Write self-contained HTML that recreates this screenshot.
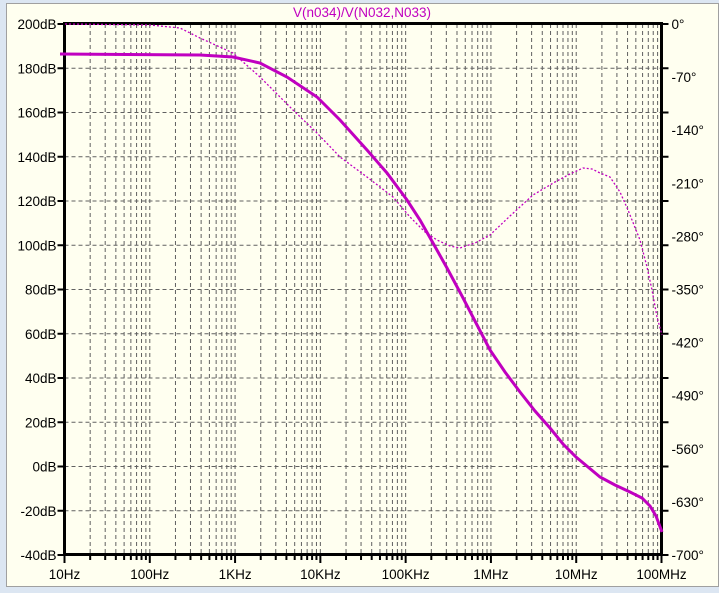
<!DOCTYPE html><html><head><style>
body{margin:0;width:719px;height:593px;overflow:hidden;background:#dce6f2;font-family:"Liberation Sans",Arial,sans-serif}
</style></head><body>
<svg width="719" height="593" xmlns="http://www.w3.org/2000/svg" style="position:absolute;left:0;top:0">
<rect x="0" y="0" width="719" height="593" fill="#dce6f2"/>
<rect x="6.5" y="3.5" width="712" height="583" fill="#fffff0" stroke="#a0a0a0"/>
<g id="grid" stroke="#606060" stroke-width="1" stroke-dasharray="4,3" fill="none"></g>
<g id="ticks" stroke="#000" stroke-width="2"></g>
<rect x="64.5" y="23.5" width="597" height="531" fill="none" stroke="#000" stroke-width="3"/>
<polyline fill="none" stroke="#c000c0" stroke-width="1.3" stroke-dasharray="2,2" points="65,24 150,25 180,28 200,38 233,53 260,77 293,110 317,133 340,157 367,177 393,197 410,217 425,232 437,240 450,246 460,248 475,243 490,235 510,216 533,195 555,182 570,174 583,168 592,169 600,173 610,177 620,192 628,210 634,225 640,240 647,267 652,290 657,317 662,335"/>
<polyline fill="none" stroke="#c000c0" stroke-width="3" points="60,54 200,55 233,57 260,63 287,77 317,97 340,120 367,150 387,173 407,200 420,220 433,243 447,268 462,296 476,323 490,350 505,372 520,392 535,411 550,428 563,444 576,457 588,467 600,477 615,485 630,492 642,498 650,506 656,516 662,532"/>
<g font-size="13.5" fill="#000" id="lab"></g>
<text x="362" y="17" font-size="13.5" fill="#c000c0" text-anchor="middle">V(n034)/V(N032,N033)</text>
</svg>
<script>
const ns="http://www.w3.org/2000/svg";
const g=document.getElementById('grid'),t=document.getElementById('ticks'),l=document.getElementById('lab');
function el(p,n,a,txt){const e=document.createElementNS(ns,n);for(const k in a)e.setAttribute(k,a[k]);if(txt)e.textContent=txt;p.appendChild(e);}
const x0=64.5,x1=661.5,y0=24,y1=555,dec=(x1-x0)/7;
for(let d=0;d<7;d++)for(let m=1;m<=9;m++){const x=x0+dec*(d+Math.log10(m));if(x>x0+1)el(g,'line',{x1:x,y1:y0,x2:x,y2:y1});el(t,'line',{x1:x,y1:y1,x2:x,y2:y1+(m==1?8:5)});}
el(t,'line',{x1:x1,y1:y1,x2:x1,y2:y1+8});
const fl=['10Hz','100Hz','1KHz','10KHz','100KHz','1MHz','10MHz','100MHz'];
fl.forEach((s,i)=>el(l,'text',{x:x0+dec*i,y:579,'text-anchor':'middle'},s));
for(let i=0;i<=12;i++){const y=y0+(y1-y0)*i/12;if(i>0&&i<12)el(g,'line',{x1:x0,y1:y,x2:x1,y2:y});
el(t,'line',{x1:x0-7,y1:y,x2:x0,y2:y});el(t,'line',{x1:x1,y1:y,x2:x1+7,y2:y});
el(l,'text',{x:x0-8,y:y+5,'text-anchor':'end'},(200-20*i)+'dB');}
for(let i=0;i<=10;i++){const y=y0+(y1-y0)*i/10;el(l,'text',{x:x1+10,y:y+5},(i==0?'0':'-'+(70*i))+'°');}
</script>
</body></html>
